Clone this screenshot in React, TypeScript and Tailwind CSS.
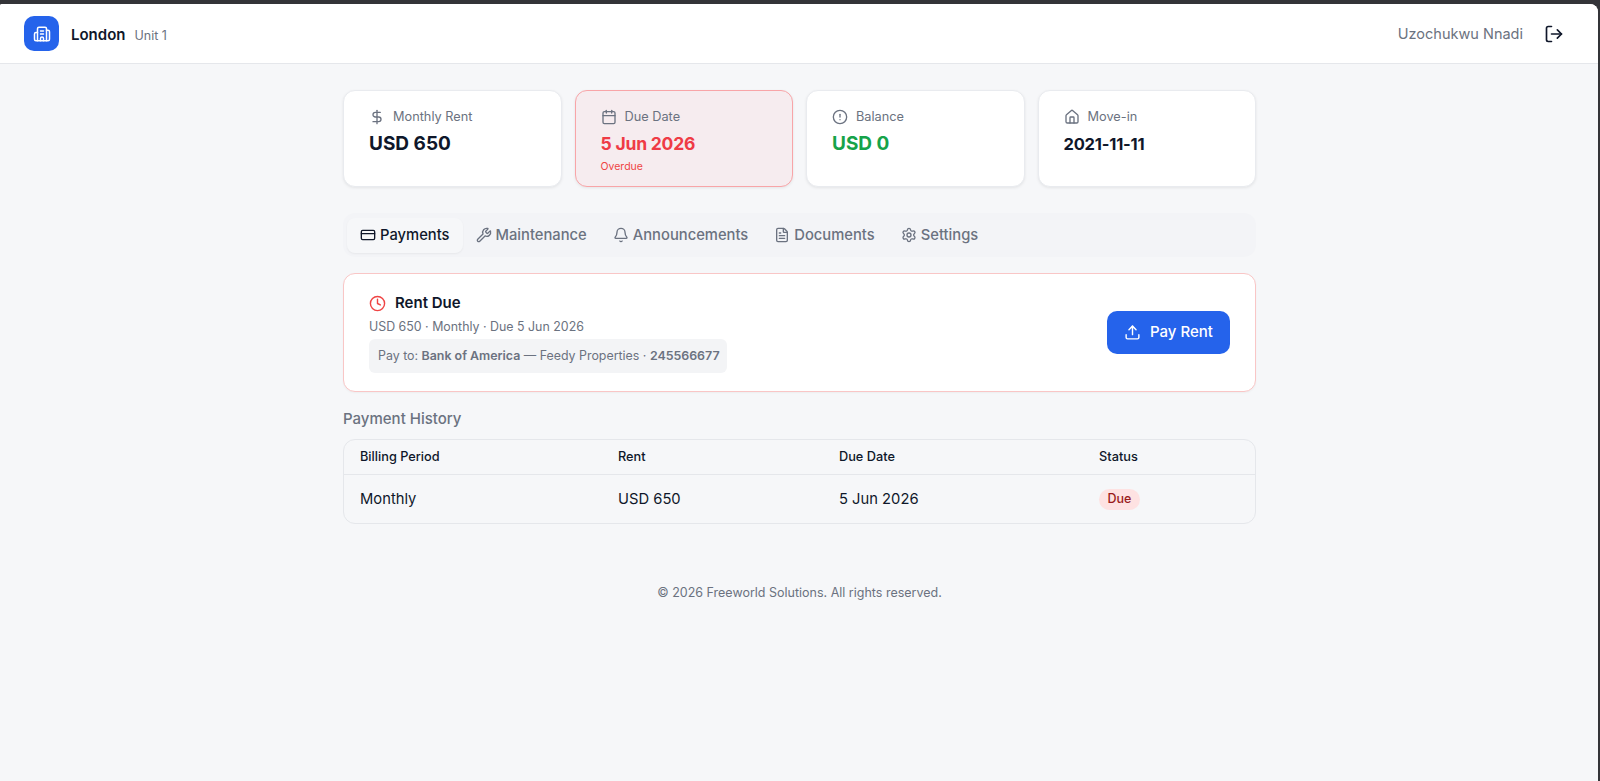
import { Building2, Calendar, CircleAlert, Clock, CreditCard, DollarSign, FileText, Bell, House, LogOut, Settings, Upload, Wrench } from 'lucide-react';
import type { ReactNode } from 'react';

interface StatCardProps {
  icon: ReactNode;
  label: string;
  value: string;
  valueClass?: string;
  overdue?: boolean;
}

function StatCard({ icon, label, value, valueClass = 'text-[19px] text-[#0f172a]', overdue }: StatCardProps) {
  const cardClass = overdue
    ? 'border-[#f8a5a8] bg-[#f6ecef]'
    : 'border-[#e9ebef] bg-white';

  return (
    <div className={`h-[97px] rounded-xl border px-[25px] pt-[16px] shadow-[0_1px_3px_rgba(0,0,0,0.08)] ${cardClass}`}>
      <div className="flex items-center gap-2 text-[12.75px] leading-5 text-[#6b7280]">
        {icon}
        <span>{label}</span>
      </div>
      <div className={`mt-[3px] font-bold leading-7 ${valueClass}`}>{value}</div>
      {overdue && <div className="mt-[1px] text-[10.5px] leading-4 text-[#ef4444]">Overdue</div>}
    </div>
  );
}

const tabs = [
  { label: 'Payments', icon: <CreditCard size={16} />, active: true },
  { label: 'Maintenance', icon: <Wrench size={16} /> },
  { label: 'Announcements', icon: <Bell size={16} /> },
  { label: 'Documents', icon: <FileText size={16} /> },
  { label: 'Settings', icon: <Settings size={16} /> },
];

export default function App() {
  return (
    <div className="h-[781px] overflow-hidden bg-[#333438] pt-[4px] pr-[2px] font-['Inter',sans-serif]">
      <div className="h-full rounded-tl-[2px] rounded-tr-[8px] bg-[#f6f7f9]">
        {/* Top bar */}
        <header className="flex h-[60px] items-center justify-between rounded-t-[inherit] border-b border-[#e5e7eb] bg-white pl-6 pr-[34px]">
          <div className="flex items-center">
            <div className="flex h-[35px] w-[35px] items-center justify-center rounded-[10px] bg-[#2563eb] text-white">
              <Building2 size={18} />
            </div>
            <div className="ml-[12px] mt-[3px] flex items-baseline gap-[9px]">
              <span className="text-[15px] font-semibold text-[#0f172a]">London</span>
              <span className="text-[12.5px] text-[#6b7280]">Unit 1</span>
            </div>
          </div>
          <div className="flex items-center">
            <span className="text-[14.5px] text-[#6b7280]">Uzochukwu Nnadi</span>
            <LogOut size={20} className="ml-[21px] text-[#0f172a]" />
          </div>
        </header>

        <main className="mx-auto max-w-[914px] pl-[1px] pt-[26px]">
          <div className="grid grid-cols-4 gap-[13px]">
            <StatCard icon={<DollarSign size={16} />} label="Monthly Rent" value="USD 650" />
            <StatCard
              icon={<Calendar size={16} />}
              label="Due Date"
              value="5 Jun 2026"
              valueClass="text-[17.5px] tracking-[-0.2px] text-[#ef3b45]"
              overdue
            />
            <StatCard icon={<CircleAlert size={16} />} label="Balance" value="USD 0" valueClass="text-[19px] text-[#16a34a]" />
            <StatCard icon={<House size={16} />} label="Move-in" value="2021-11-11" valueClass="text-[16.5px] tracking-[-0.2px] text-[#0f172a]" />
          </div>

          {/* Tabs */}
          <nav className="mt-[26px] flex h-[44px] items-center rounded-xl bg-[#f3f4f7] px-[4px]">
            {tabs.map((tab) => (
              <div
                key={tab.label}
                className={
                  tab.active
                    ? 'flex h-[35px] items-center gap-[4px] rounded-lg bg-[#f6f7f9] px-[13px] text-[14.75px] font-medium text-[#0f172a] shadow-[0_1px_2px_rgba(0,0,0,0.05)]'
                    : 'flex h-[35px] items-center gap-[4px] px-[13px] text-[14.75px] font-medium text-[#6b7280]'
                }
              >
                {tab.icon}
                <span>{tab.label}</span>
              </div>
            ))}
          </nav>

          {/* Rent due */}
          <section className="mt-[16px] flex h-[119px] items-center justify-between rounded-xl border border-[#f9c6c6] bg-white pl-[25px] pr-[25px] shadow-[0_1px_2px_rgba(0,0,0,0.04)]">
            <div>
              <div className="flex items-center gap-[9px]">
                <Clock size={17} className="text-[#ef4444]" />
                <span className="text-[15px] font-semibold text-[#0f172a]">Rent Due</span>
              </div>
              <p className="mt-[3px] text-[12.4px] leading-5 text-[#6b7280]">USD 650 · Monthly · Due 5 Jun 2026</p>
              <p className="mt-[2px] flex h-[34px] items-center rounded-md bg-[#f3f4f6] pl-[9px] pr-[7px] text-[12.4px] text-[#6b7280]">
                <span className="whitespace-pre">Pay to: <strong className="font-semibold">Bank of America</strong> — Feedy Properties · <strong className="font-semibold">245566677</strong></span>
              </p>
            </div>
            <button className="flex h-[43px] w-[123px] items-center justify-center gap-[9px] rounded-[10px] bg-[#2563eb] text-[15px] font-medium text-white">
              <Upload size={17} />
              Pay Rent
            </button>
          </section>

          <h2 className="mt-[17px] text-[15px] font-medium leading-5 text-[#6b7280]">Payment History</h2>

          <table className="mt-[10px] block w-full overflow-hidden rounded-xl border border-[#e5e7eb] text-[#0f172a]">
            <thead className="block">
              <tr className="flex h-[35px] items-center border-b border-[#e5e7eb] pl-[16px] text-left text-[12.75px]">
                <th className="w-[258px] font-medium">Billing Period</th>
                <th className="w-[221px] font-medium">Rent</th>
                <th className="w-[260px] font-medium">Due Date</th>
                <th className="font-medium">Status</th>
              </tr>
            </thead>
            <tbody className="block">
              <tr className="flex h-[48px] items-center pl-[16px] text-[14.75px]">
                <td className="w-[258px]">Monthly</td>
                <td className="w-[221px]">USD 650</td>
                <td className="w-[260px]">5 Jun 2026</td>
                <td>
                  <span className="flex h-[21px] w-[41px] items-center justify-center rounded-full bg-[#fee2e2] text-[12.5px] font-medium text-[#991b1b]">Due</span>
                </td>
              </tr>
            </tbody>
          </table>

          <footer className="mt-[59px] text-center text-[12.5px] leading-5 text-[#6b7280]">© 2026 Freeworld Solutions. All rights reserved.</footer>
        </main>
      </div>
    </div>
  );
}
